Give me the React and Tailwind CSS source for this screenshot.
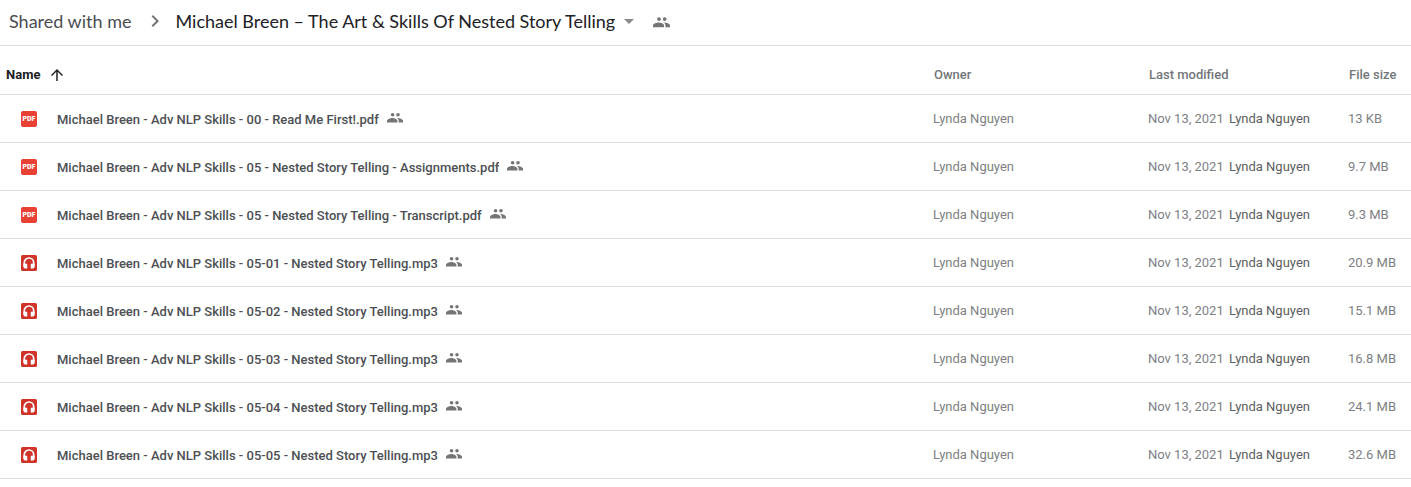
import React from "react";
import { MdArrowDropDown, MdArrowUpward, MdChevronRight } from "react-icons/md";

const OWNER = "Lynda Nguyen";

const FILES = [
  { name: "Michael Breen - Adv NLP Skills - 00 - Read Me First!.pdf", kind: "pdf", size: "13 KB" },
  { name: "Michael Breen - Adv NLP Skills - 05 - Nested Story Telling - Assignments.pdf", kind: "pdf", size: "9.7 MB" },
  { name: "Michael Breen - Adv NLP Skills - 05 - Nested Story Telling - Transcript.pdf", kind: "pdf", size: "9.3 MB" },
  { name: "Michael Breen - Adv NLP Skills - 05-01 - Nested Story Telling.mp3", kind: "audio", size: "20.9 MB" },
  { name: "Michael Breen - Adv NLP Skills - 05-02 - Nested Story Telling.mp3", kind: "audio", size: "15.1 MB" },
  { name: "Michael Breen - Adv NLP Skills - 05-03 - Nested Story Telling.mp3", kind: "audio", size: "16.8 MB" },
  { name: "Michael Breen - Adv NLP Skills - 05-04 - Nested Story Telling.mp3", kind: "audio", size: "24.1 MB" },
  { name: "Michael Breen - Adv NLP Skills - 05-05 - Nested Story Telling.mp3", kind: "audio", size: "32.6 MB" },
];

function SharedIcon({ className }) {
  return (
    <svg viewBox="0 0 16 16" className={className} fill="currentColor" aria-label="Shared" role="img">
      <circle cx="5.6" cy="4.8" r="1.800" />
      <circle cx="11" cy="4.8" r="1.800" />
      <path d="M5.4 7.900C3.500 7.900 0 8.900 0 10.800v1.700h10.400v-1.700c0-1.900-3.100-2.900-5-2.900z" />
      <path d="M10.600 7.900c-.2 0-.4 0-.6.03 1.100.7 1.700 1.700 1.700 2.870v1.700H16v-1.700c0-1.900-3.500-2.900-5.400-2.900z" />
    </svg>
  );
}

function PdfIcon() {
  return (
    <span className="flex size-4 shrink-0 items-center justify-center rounded-xs bg-[#e94235] text-[7px] leading-none font-black text-white">
      PDF
    </span>
  );
}

function AudioIcon() {
  return (
    <svg viewBox="0 0 16 16" className="size-4 shrink-0" aria-hidden="true">
      <rect width="16" height="16" rx="1.500" fill="#d0332a" />
      <path d="M3.300 11.500V7.700a4.700 4.700 0 0 1 9.400 0v3.800" fill="none" stroke="#fff" strokeWidth="1.700" />
      <path d="M2.450 8.700h3.800v4.700H4a1.550 1.550 0 0 1-1.550-1.550zM9.750 8.700h3.800v3.150A1.550 1.550 0 0 1 12 13.400H9.750z" fill="#fff" />
    </svg>
  );
}

export default function App() {
  return (
    <main className="min-h-screen bg-white font-['Roboto','Liberation_Sans',sans-serif] text-[13px]">
      <nav
        aria-label="Breadcrumb"
        className="flex h-[46px] items-center border-b border-[#dadce0] pb-1 pl-[9px] font-['Lato','Liberation_Sans',sans-serif] text-lg whitespace-nowrap"
      >
        <a href="#shared" className="text-[#4a4d51]">Shared with me</a>
        <MdChevronRight className="mr-2 ml-3 size-6 text-[#757575]" />
        <button type="button" className="flex items-center gap-0.5 text-[#202124]">
          Michael Breen – The Art &amp; Skills Of Nested Story Telling
          <MdArrowDropDown className="size-6 text-[#8a8a8a]" />
        </button>
        <SharedIcon className="mt-1 ml-3 size-[17px] text-[#757575]" />
      </nav>

      <table className="w-full table-fixed border-collapse text-left whitespace-nowrap">
        <colgroup>
          <col />
          <col className="w-[215px]" />
          <col className="w-[200px]" />
          <col className="w-[63px]" />
        </colgroup>
        <thead>
          <tr className="h-12 border-b border-[#dadce0] text-[#74777a]">
            <th scope="col" className="pt-2.5 pl-1.5 text-[#202124]">
              <button type="button" className="flex items-center gap-2 font-bold">
                Name
                <MdArrowUpward className="size-[18px]" />
              </button>
            </th>
            <th scope="col" className="pt-2.5 pl-px font-medium">Owner</th>
            <th scope="col" className="pt-2.5 pl-px font-medium">Last modified</th>
            <th scope="col" className="pt-2.5 pl-px font-medium">File size</th>
          </tr>
        </thead>
        <tbody>
          {FILES.map((file) => (
            <tr key={file.name} className="h-12 border-b border-[#dadce0] text-[#7e8184]">
              <td className="pt-0.5 pl-[21px]">
                <div className="flex items-center">
                  {file.kind === "pdf" ? <PdfIcon /> : <AudioIcon />}
                  <span className="ml-5 truncate pt-px font-medium text-[#4c4f53]">{file.name}</span>
                  <SharedIcon className="mb-0.5 ml-2 size-4 shrink-0 text-[#757575]" />
                </div>
              </td>
              <td className="pt-0.5">{OWNER}</td>
              <td className="pt-0.5">
                Nov 13, 2021 <span className="ml-0.5 text-[#5b5e62]">{OWNER}</span>
              </td>
              <td className="pt-0.5">{file.size}</td>
            </tr>
          ))}
        </tbody>
      </table>
    </main>
  );
}
